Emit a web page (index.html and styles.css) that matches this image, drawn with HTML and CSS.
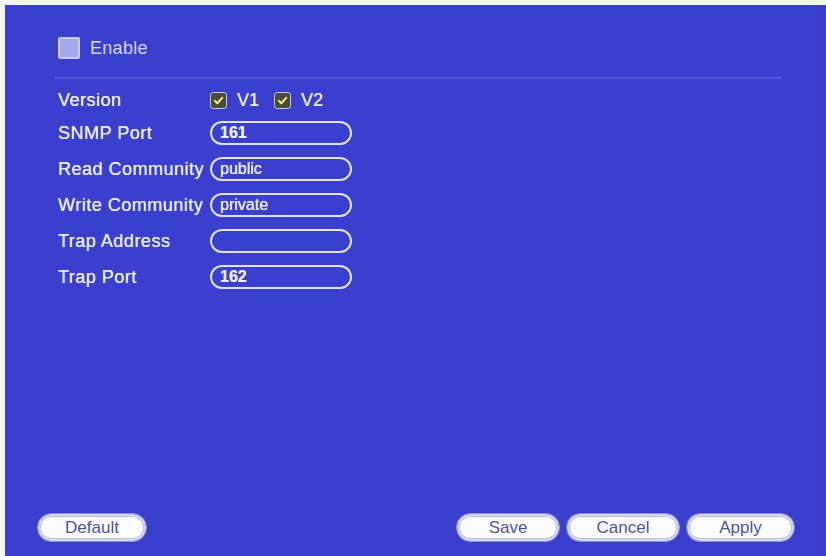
FILE: index.html
```html
<!DOCTYPE html>
<html lang="en">

<head>
  <meta charset="UTF-8">
  <meta name="viewport" content="width=device-width, initial-scale=1.0">
  <title>SNMP</title>
  <link rel="stylesheet" href="styles.css">
</head>

<body>

  <main class="panel">

    <div class="enable">
      <span class="enable_box"></span>
      <span>Enable</span>
    </div>

    <hr class="divider">

    <form class="snmp_form">
      <div class="row row_version">
        <label>Version</label>
        <span class="check"><svg viewBox="0 0 16 16"><path d="M4 8.2 L6.8 11 L12 5.2"/></svg></span>
        <span class="check_text">V1</span>
        <span class="check"><svg viewBox="0 0 16 16"><path d="M4 8.2 L6.8 11 L12 5.2"/></svg></span>
        <span class="check_text">V2</span>
      </div>
      <div class="row">
        <label>SNMP Port</label>
        <span class="field num">161</span>
      </div>
      <div class="row">
        <label>Read Community</label>
        <span class="field">public</span>
      </div>
      <div class="row">
        <label>Write Community</label>
        <span class="field">private</span>
      </div>
      <div class="row">
        <label>Trap Address</label>
        <span class="field"></span>
      </div>
      <div class="row">
        <label>Trap Port</label>
        <span class="field num">162</span>
      </div>
    </form>

    <footer class="actions">
      <button class="btn btn_default">Default</button>
      <span class="spacer"></span>
      <button class="btn btn_save">Save</button>
      <button class="btn btn_cancel">Cancel</button>
      <button class="btn btn_apply">Apply</button>
    </footer>

  </main>

</body>

</html>
```

FILE: styles.css
```css
* {
  box-sizing: border-box;
}
body {
  margin: 0;
  background-color: #f4f5fb;
  font-family: "Liberation Sans", Arial, sans-serif;
  color: #eceeff;
}
.panel {
  display: flex;
  flex-direction: column;
  margin: 5px 0 0 5px;
  width: 821px;
  height: 551px;
  padding: 32px 0 15px 0;
  background-color: #3b3fce;
  border-right: 6px solid #3a3ec8;
}
.enable {
  display: flex;
  align-items: center;
  gap: 10px;
  margin-left: 53px;
  height: 22px;
  font-size: 18px;
  color: #d3d6f6;
  letter-spacing: 0.3px;
}
.enable_box {
  width: 22px;
  height: 22px;
  border: 2px solid #c9cdf4;
  border-radius: 2px;
  background-color: #a3a9ea;
}
.divider {
  margin: 18px 0 0 50px;
  width: 727px;
  height: 2px;
  border: 0;
  background-color: #5258dc;
}
.snmp_form {
  display: flex;
  flex-direction: column;
  margin: 6px 0 0 53px;
}
.row {
  display: flex;
  align-items: center;
  height: 36px;
  font-size: 18px;
  text-shadow: 0 0 0.6px #eceeff;
}
.row_version {
  height: 30px;
}
.row label {
  width: 152px;
  letter-spacing: 0.5px;
}
.check {
  display: flex;
  width: 17px;
  height: 17px;
  border: 1.5px solid #c5c6cf;
  border-radius: 3px;
  background-color: #4c4a3e;
}
.check svg {
  width: 100%;
  height: 100%;
  fill: none;
  stroke: #ece47a;
  stroke-width: 2.2;
  stroke-linecap: round;
  stroke-linejoin: round;
}
.check_text {
  margin: 0 15px 0 10px;
}
.field {
  display: flex;
  align-items: center;
  width: 142px;
  height: 24px;
  padding-left: 8px;
  border: 2px solid #e2e4ff;
  border-radius: 12px;
  font-size: 16px;
}
.field.num {
  font-weight: bold;
}
.actions {
  display: flex;
  margin-top: auto;
  padding: 0 26px 0 33px;
  gap: 8px;
}
.spacer {
  flex: 1;
}
.btn {
  height: 27px;
  padding: 0;
  border: 2px solid #d6d8ee;
  border-radius: 13px;
  outline: 1px solid #8e92d6;
  background-color: #fcfcff;
  box-shadow: inset 0 0 0 1px #b9bce0;
  color: #50549a;
  font-family: "Liberation Sans", Arial, sans-serif;
  font-size: 17px;
}
.btn_default {
  width: 108px;
}
.btn_save {
  width: 102px;
}
.btn_cancel {
  width: 112px;
}
.btn_apply {
  width: 107px;
}
```
